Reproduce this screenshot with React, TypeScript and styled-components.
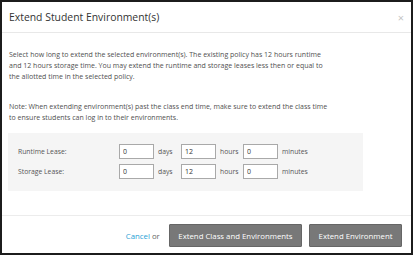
import styled, { createGlobalStyle } from 'styled-components'

const GlobalStyle = createGlobalStyle`
  html, body {
    margin: 0;
    padding: 0;
    background: #fff;
  }
  body {
    font-family: 'Open Sans', 'Liberation Sans', sans-serif;
  }
  * {
    box-sizing: border-box;
  }
`

interface Lease {
  label: string
  days: string
  hours: string
  minutes: string
}

const leases: Lease[] = [
  { label: 'Runtime Lease:', days: '0', hours: '12', minutes: '0' },
  { label: 'Storage Lease:', days: '0', hours: '12', minutes: '0' },
]

const App = () => {
  return (
    <>
      <GlobalStyle />
      <Dialog>
        <Header>
          <h1 className="title">Extend Student Environment(s)</h1>
          <CloseButton aria-label="Close">×</CloseButton>
        </Header>
        <Body>
          <p>
            Select how long to extend the selected environment(s). The existing policy has 12 hours runtime
            and 12 hours storage time. You may extend the runtime and storage leases less then or equal to
            the allotted time in the selected policy.
          </p>
          <p>
            Note: When extending environment(s) past the class end time, make sure to extend the class time
            to ensure students can log in to their environments.
          </p>
          <LeasePanel>
            {leases.map((lease) => (
              <LeaseRow key={lease.label}>
                <span className="label">{lease.label}</span>
                <LeaseInput defaultValue={lease.days} />
                <span className="unit">days</span>
                <LeaseInput defaultValue={lease.hours} />
                <span className="unit">hours</span>
                <LeaseInput defaultValue={lease.minutes} />
                <span className="unit">minutes</span>
              </LeaseRow>
            ))}
          </LeasePanel>
        </Body>
        <Footer>
          <span className="cancel">
            <a href="#">Cancel</a> or
          </span>
          <Button>Extend Class and Environments</Button>
          <Button>Extend Environment</Button>
        </Footer>
      </Dialog>
    </>
  )
}

export default App

const Dialog = styled.div`
  width: 413px;
  height: 255px;
  border: 2px solid #1c1c1c;
  background: #fff;
  display: flex;
  flex-direction: column;
`

const Header = styled.div`
  height: 31px;
  flex-shrink: 0;
  display: flex;
  align-items: center;
  justify-content: space-between;
  padding: 0 7px 0 7px;
  border-bottom: 1px solid #e8e8e8;

  .title {
    margin: 0;
    font-size: 10.4px;
    font-weight: 400;
    color: #333;
  }
`

const CloseButton = styled.button`
  border: none;
  background: none;
  padding: 0;
  font-family: inherit;
  font-size: 11px;
  line-height: 1;
  color: #c4c4c4;
  cursor: pointer;
`

const Body = styled.div`
  flex: 1;
  padding: 15.5px 7px 0 7px;
  color: #505050;
  font-size: 7px;
  line-height: 11px;

  p {
    max-width: 325px;
    margin: 0 0 19px 0;
  }
  p + p {
    margin-bottom: 10.5px;
  }
`

const LeasePanel = styled.div`
  width: 355px;
  margin-left: -1px;
  padding: 11px 0 12px 10px;
  background: #f5f5f5;
  display: flex;
  flex-direction: column;
  gap: 5px;
`

const LeaseRow = styled.div`
  display: flex;
  align-items: center;
  font-size: 6.8px;
  color: #555;

  .label {
    width: 101px;
  }
  .unit {
    width: 27px;
    padding-left: 4px;
  }
`

const LeaseInput = styled.input`
  width: 35px;
  height: 15px;
  padding: 0 3px;
  border: 1px solid #a9a9a9;
  background: #fff;
  font-family: inherit;
  font-size: 7px;
  color: #333;
`

const Footer = styled.div`
  height: 38px;
  flex-shrink: 0;
  display: flex;
  align-items: center;
  justify-content: flex-end;
  gap: 7px;
  padding: 2px 9px 0 0;
  border-top: 1px solid #ececec;

  .cancel {
    font-size: 7.8px;
    color: #666;
    margin-right: 2px;
  }
  .cancel a {
    color: #2a9fd6;
    text-decoration: none;
  }
`

const Button = styled.button`
  height: 23px;
  padding: 0 8.5px;
  border: 1px solid #666;
  border-radius: 1px;
  background: #787878;
  color: #fff;
  font-family: inherit;
  font-size: 7.8px;
  cursor: pointer;
`
